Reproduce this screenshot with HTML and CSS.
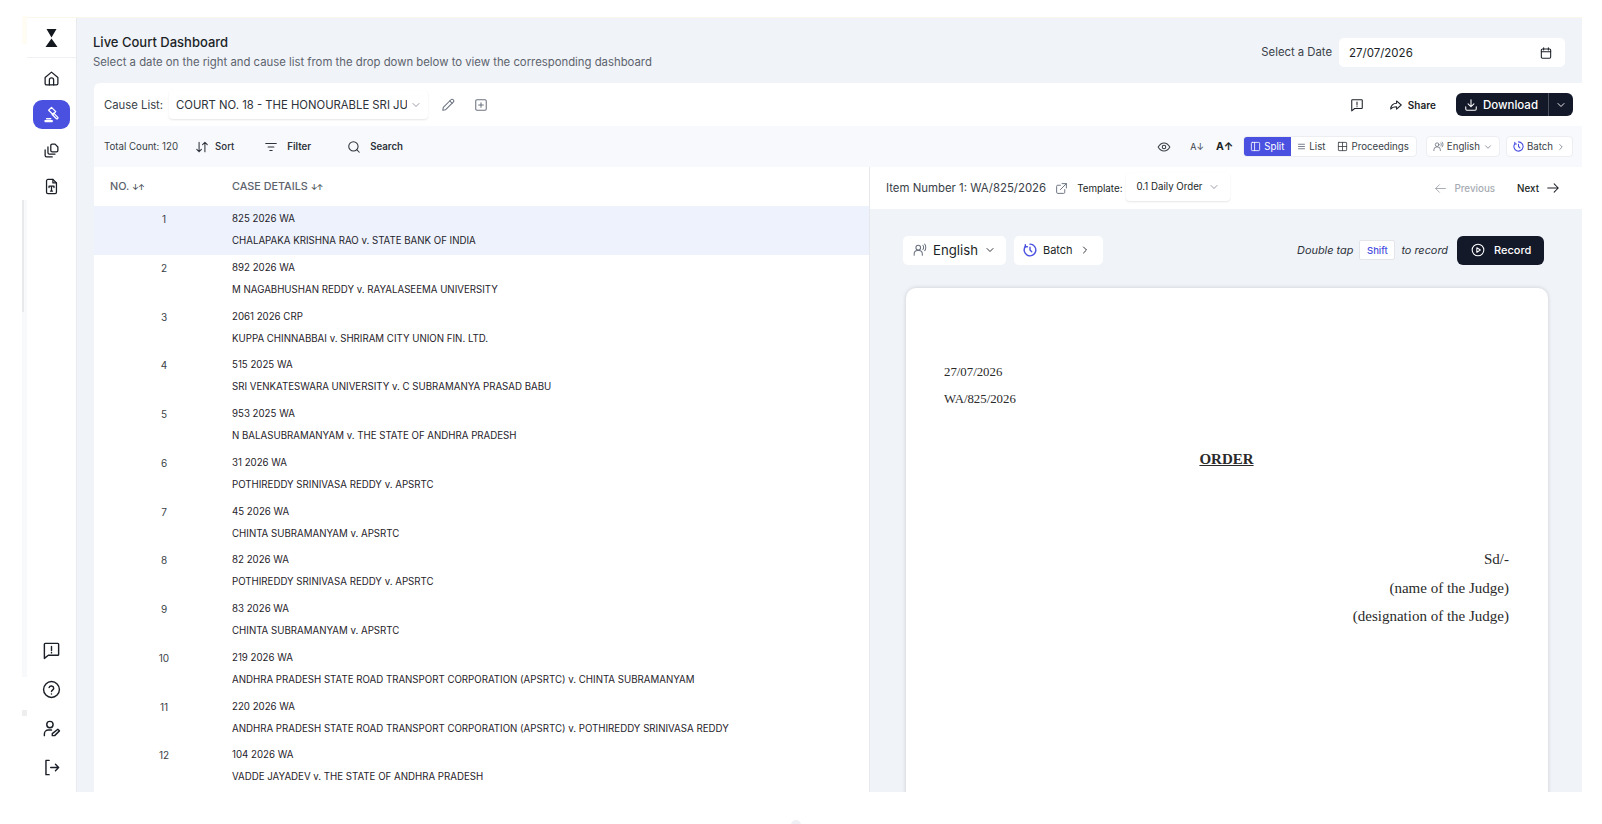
FILE: index.html
```html
<!DOCTYPE html>
<html lang="en">

<head>
    <meta charset="UTF-8">
    <meta name="viewport" content="width=device-width, initial-scale=1.0">
    <title>Live Court Dashboard</title>
    <link rel="stylesheet" href="styles.css">
</head>

<body>
    <svg class="sprite" width="0" height="0">
        <symbol id="i-home" viewBox="0 0 24 24"><path d="M3 10.500 12 3l9 7.500V19a2 2 0 0 1-2 2H5a2 2 0 0 1-2-2z"/><path d="M9 21v-7a3 3 0 0 1 6 0v7"/></symbol>
        <symbol id="i-gavel" viewBox="0 0 24 24"><path d="m8 6 4-4 6 6-4 4z"/><path d="m15 10 6 6a1.500 1.500 0 0 1-2 2l-6-6"/><path d="M5 18h6"/><path d="M3 22v-1.500h10V22z"/></symbol>
        <symbol id="i-copy" viewBox="0 0 24 24"><path d="M13 3h4l4 4v5a2 2 0 0 1-2 2h-6a2 2 0 0 1-2-2V5a2 2 0 0 1 2-2z"/><path d="M7 7v8a2 2 0 0 0 2 2h8"/><path d="M3 11v8a2 2 0 0 0 2 2h8"/></symbol>
        <symbol id="i-file" viewBox="0 0 24 24"><path d="M14 2H7a2 2 0 0 0-2 2v16a2 2 0 0 0 2 2h10a2 2 0 0 0 2-2V7z"/><path d="M14 2v5h5"/><path d="M8.500 13.500V11.500h7v2M12 11.500v7M10.500 18.500h3"/></symbol>
        <symbol id="i-chat" viewBox="0 0 24 24"><path d="M4 3h16a1 1 0 0 1 1 1v13a1 1 0 0 1-1 1H8l-5 4V4a1 1 0 0 1 1-1z"/><path d="M12 7v5M12 14.500v.5"/></symbol>
        <symbol id="i-help" viewBox="0 0 24 24"><circle cx="12" cy="12" r="10"/><path d="M9 9.500a3 3 0 0 1 5.800 1c0 2-2.800 2.500-2.800 4M12 17.500v.2"/></symbol>
        <symbol id="i-user" viewBox="0 0 24 24"><circle cx="10" cy="7" r="4"/><path d="M3 21v-2a5 5 0 0 1 5-5h4"/><path d="m20 13 2 2-6 6h-3v-2.500z"/></symbol>
        <symbol id="i-logout" viewBox="0 0 24 24"><path d="M9 3H5v18h4"/><path d="M11 12h10M17 8l4 4-4 4"/></symbol>
        <symbol id="i-cal" viewBox="0 0 24 24"><rect x="4" y="5" width="16" height="16" rx="2"/><path d="M8 3v4M16 3v4M4 10h16"/></symbol>
        <symbol id="i-chev" viewBox="0 0 24 24"><path d="m6 9 6 6 6-6"/></symbol>
        <symbol id="i-right" viewBox="0 0 24 24"><path d="m9 6 6 6-6 6"/></symbol>
        <symbol id="i-pen" viewBox="0 0 24 24"><path d="M17 3a2.800 2.800 0 0 1 4 4L8 20l-5 1 1-5z"/><path d="m15 5 4 4"/></symbol>
        <symbol id="i-plus" viewBox="0 0 24 24"><rect x="3" y="3" width="18" height="18" rx="2"/><path d="M12 8v8M8 12h8"/></symbol>
        <symbol id="i-share" viewBox="0 0 24 24"><path d="M13 5l8 7-8 7v-4c-5 0-8 1-10 4 0-6 4-10 10-10z"/></symbol>
        <symbol id="i-download" viewBox="0 0 24 24"><path d="M12 3v12M7 10l5 5 5-5"/><path d="M3 15v4a2 2 0 0 0 2 2h14a2 2 0 0 0 2-2v-4"/></symbol>
        <symbol id="i-sort" viewBox="0 0 24 24"><path d="M7 4v16M3 16l4 4 4-4M17 20V4M13 8l4-4 4 4"/></symbol>
        <symbol id="i-filter" viewBox="0 0 24 24"><path d="M3 6h18M7 12h10M10 18h4"/></symbol>
        <symbol id="i-search" viewBox="0 0 24 24"><circle cx="11" cy="11" r="8"/><path d="m21 21-4.300-4.300"/></symbol>
        <symbol id="i-eye" viewBox="0 0 24 24"><path d="M2 12s4-7 10-7 10 7 10 7-4 7-10 7-10-7-10-7z"/><circle cx="12" cy="12" r="3"/></symbol>
        <symbol id="i-split" viewBox="0 0 24 24"><rect x="3" y="3" width="18" height="18" rx="2"/><path d="M10 3v18"/></symbol>
        <symbol id="i-list" viewBox="0 0 24 24"><path d="M3 6h18M3 12h18M3 18h18"/></symbol>
        <symbol id="i-table" viewBox="0 0 24 24"><rect x="3" y="3" width="18" height="18" rx="1"/><path d="M12 3v18M3 12h18"/></symbol>
        <symbol id="i-voice" viewBox="0 0 24 24"><circle cx="9" cy="8" r="4"/><path d="M2 21v-2a6 6 0 0 1 6-6h2a6 6 0 0 1 6 6v2"/><path d="M17 4c1.500 1 1.500 6 0 7M20 2c2.500 2 2.500 9 0 11"/></symbol>
        <symbol id="i-clock" viewBox="0 0 24 24"><path d="M12 2a10 10 0 1 1-8 4"/><path d="M4 3v3.500h3.500"/><path d="M12 7v5l3 3"/></symbol>
        <symbol id="i-play" viewBox="0 0 24 24"><circle cx="12" cy="12" r="10"/><path d="m10 8 6 4-6 4z"/></symbol>
        <symbol id="i-ext" viewBox="0 0 24 24"><path d="M13 3h8v8M21 3 10 14"/><path d="M18 14v5a2 2 0 0 1-2 2H5a2 2 0 0 1-2-2V8a2 2 0 0 1 2-2h5"/></symbol>
        <symbol id="i-back" viewBox="0 0 24 24"><path d="M21 12H3M10 5l-7 7 7 7"/></symbol>
        <symbol id="i-next" viewBox="0 0 24 24"><path d="M3 12h18M14 5l7 7-7 7"/></symbol>
    </svg>

    <div class="strip strip-a"></div>
    <div class="strip strip-b"></div>
    <div class="strip strip-c"></div>
    <div class="strip strip-d"></div>
    <div class="speck"></div>

    <div class="app">
        <aside class="sidebar">
            <div class="logo">
                <svg width="13" height="18" viewBox="0 0 13 18"><path d="M1.500 0h10L6.500 8.500zM6.500 9.500 12.500 18H.5z" fill="#14181f"/></svg>
            </div>
            <nav class="nav">
                <a class="nav-item"><svg class="icon nav-icon"><use href="#i-home"/></svg></a>
                <a class="nav-item active"><svg class="icon nav-icon"><use href="#i-gavel"/></svg></a>
                <a class="nav-item"><svg class="icon nav-icon"><use href="#i-copy"/></svg></a>
                <a class="nav-item"><svg class="icon nav-icon"><use href="#i-file"/></svg></a>
            </nav>
            <nav class="nav nav-bottom">
                <a class="nav-item"><svg class="icon nav-icon big"><use href="#i-chat"/></svg></a>
                <a class="nav-item"><svg class="icon nav-icon big"><use href="#i-help"/></svg></a>
                <a class="nav-item"><svg class="icon nav-icon big"><use href="#i-user"/></svg></a>
                <a class="nav-item"><svg class="icon nav-icon big"><use href="#i-logout"/></svg></a>
            </nav>
        </aside>

        <main class="main">
            <header class="page-head">
                <div>
                    <h1>Live Court Dashboard</h1>
                    <p>Select a date on the right and cause list from the drop down below to view the corresponding dashboard</p>
                </div>
                <div class="date-wrap">
                    <span>Select a Date</span>
                    <div class="date-input">27/07/2026 <svg class="icon s14"><use href="#i-cal"/></svg></div>
                </div>
            </header>

            <section class="board">
                <div class="bar-top">
                    <span class="label">Cause List:</span>
                    <div class="select cause">
                        <span class="cause-text">COURT NO. 18 - THE HONOURABLE SRI JUSTICE</span>
                        <svg class="icon s12 muted"><use href="#i-chev"/></svg>
                    </div>
                    <svg class="icon s14 grey edit"><use href="#i-pen"/></svg>
                    <svg class="icon s14 grey add"><use href="#i-plus"/></svg>
                    <div class="spacer"></div>
                    <svg class="icon s14"><use href="#i-chat"/></svg>
                    <span class="share"><svg class="icon s14"><use href="#i-share"/></svg>Share</span>
                    <div class="download">
                        <span class="download-main"><svg class="icon s14"><use href="#i-download"/></svg>Download</span>
                        <span class="download-arrow"><svg class="icon s12"><use href="#i-chev"/></svg></span>
                    </div>
                </div>

                <div class="bar-tools">
                    <span class="count">Total Count: 120</span>
                    <span class="tool t-sort"><svg class="icon s14"><use href="#i-sort"/></svg>Sort</span>
                    <span class="tool t-filter"><svg class="icon s14"><use href="#i-filter"/></svg>Filter</span>
                    <span class="tool t-search"><svg class="icon s14"><use href="#i-search"/></svg>Search</span>
                    <div class="spacer"></div>
                    <svg class="icon s14 eye"><use href="#i-eye"/></svg>
                    <span class="font-small">A↓</span>
                    <span class="font-big">A↑</span>
                    <div class="views">
                        <span class="view on"><svg class="icon s11"><use href="#i-split"/></svg>Split</span>
                        <span class="view view-list"><svg class="icon s9 grey"><use href="#i-list"/></svg>List</span>
                        <span class="view"><svg class="icon s11"><use href="#i-table"/></svg>Proceedings</span>
                    </div>
                    <span class="chip chip-lang"><svg class="icon s11 grey"><use href="#i-voice"/></svg>English<svg class="icon s10 grey"><use href="#i-chev"/></svg></span>
                    <span class="chip chip-batch"><svg class="icon s11 blue"><use href="#i-clock"/></svg>Batch<svg class="icon s10 grey"><use href="#i-right"/></svg></span>
                </div>

                <div class="split">
                    <div class="list">
                        <div class="row row-head">
                            <div class="col-no">NO. <span class="sort-mark">↓↑</span></div>
                            <div class="col-case">CASE DETAILS <span class="sort-mark">↓↑</span></div>
                        </div>
                        <div class="row selected"><div class="num">1</div><div class="case"><div>825 2026 WA</div><div>CHALAPAKA KRISHNA RAO v. STATE BANK OF INDIA</div></div></div>
                        <div class="row"><div class="num">2</div><div class="case"><div>892 2026 WA</div><div>M NAGABHUSHAN REDDY v. RAYALASEEMA UNIVERSITY</div></div></div>
                        <div class="row"><div class="num">3</div><div class="case"><div>2061 2026 CRP</div><div>KUPPA CHINNABBAI v. SHRIRAM CITY UNION FIN. LTD.</div></div></div>
                        <div class="row"><div class="num">4</div><div class="case"><div>515 2025 WA</div><div>SRI VENKATESWARA UNIVERSITY v. C SUBRAMANYA PRASAD BABU</div></div></div>
                        <div class="row"><div class="num">5</div><div class="case"><div>953 2025 WA</div><div>N BALASUBRAMANYAM v. THE STATE OF ANDHRA PRADESH</div></div></div>
                        <div class="row"><div class="num">6</div><div class="case"><div>31 2026 WA</div><div>POTHIREDDY SRINIVASA REDDY v. APSRTC</div></div></div>
                        <div class="row"><div class="num">7</div><div class="case"><div>45 2026 WA</div><div>CHINTA SUBRAMANYAM v. APSRTC</div></div></div>
                        <div class="row"><div class="num">8</div><div class="case"><div>82 2026 WA</div><div>POTHIREDDY SRINIVASA REDDY v. APSRTC</div></div></div>
                        <div class="row"><div class="num">9</div><div class="case"><div>83 2026 WA</div><div>CHINTA SUBRAMANYAM v. APSRTC</div></div></div>
                        <div class="row"><div class="num">10</div><div class="case"><div>219 2026 WA</div><div>ANDHRA PRADESH STATE ROAD TRANSPORT CORPORATION (APSRTC) v. CHINTA SUBRAMANYAM</div></div></div>
                        <div class="row"><div class="num">11</div><div class="case"><div>220 2026 WA</div><div>ANDHRA PRADESH STATE ROAD TRANSPORT CORPORATION (APSRTC) v. POTHIREDDY SRINIVASA REDDY</div></div></div>
                        <div class="row"><div class="num">12</div><div class="case"><div>104 2026 WA</div><div>VADDE JAYADEV v. THE STATE OF ANDHRA PRADESH</div></div></div>
                    </div>

                    <div class="detail">
                        <div class="detail-head">
                            <span class="item-no">Item Number 1: WA/825/2026</span>
                            <svg class="icon s13 grey ext"><use href="#i-ext"/></svg>
                            <span class="tpl-label">Template:</span>
                            <div class="select tpl">0.1 Daily Order <svg class="icon s12 muted"><use href="#i-chev"/></svg></div>
                            <div class="spacer"></div>
                            <span class="pager prev"><svg class="icon s13"><use href="#i-back"/></svg>Previous</span>
                            <span class="pager next">Next<svg class="icon s14"><use href="#i-next"/></svg></span>
                        </div>
                        <div class="detail-body">
                            <div class="rec-bar">
                                <span class="pill lang"><svg class="icon s14 grey"><use href="#i-voice"/></svg>English<svg class="icon s12"><use href="#i-chev"/></svg></span>
                                <span class="pill batch"><svg class="icon s14 blue"><use href="#i-clock"/></svg>Batch<svg class="icon s12"><use href="#i-right"/></svg></span>
                                <div class="spacer"></div>
                                <em class="hint">Double tap</em>
                                <kbd>Shift</kbd>
                                <em class="hint">to record</em>
                                <button class="record"><svg class="icon s14"><use href="#i-play"/></svg>Record</button>
                            </div>
                            <article class="paper">
                                <p>27/07/2026</p>
                                <p>WA/825/2026</p>
                                <h2>ORDER</h2>
                                <div class="sign">
                                    <p>Sd/-</p>
                                    <p>(name of the Judge)</p>
                                    <p>(designation of the Judge)</p>
                                </div>
                            </article>
                        </div>
                    </div>
                </div>
            </section>
        </main>
    </div>
</body>

</html>
```

FILE: styles.css
```css
* {
    box-sizing: border-box;
}

html,
body {
    margin: 0;
    height: 100%;
    overflow: hidden;
}

body {
    font-family: Inter, Arial, sans-serif;
    background-color: white;
    color: #1b1f27;
    position: relative;
}

.sprite {
    display: none;
}

.icon {
    fill: none;
    stroke: currentColor;
    stroke-width: 1.8;
    stroke-linecap: round;
    stroke-linejoin: round;
    flex: none;
}

.s9 { width: 9px; height: 9px; stroke-width: 2.4; stroke-linecap: butt; }
.s10 { width: 10px; height: 10px; }
.s11 { width: 11px; height: 11px; }
.s12 { width: 12px; height: 12px; }
.s13 { width: 13px; height: 13px; }
.s14 { width: 14px; height: 14px; }

.grey { color: #6b7280; }
.muted { color: #8a909b; }
.blue { color: #4a50e0; stroke-width: 2.4; }

.spacer {
    flex: 1;
}

/* bits of the page behind the app */
.strip {
    position: absolute;
    left: 22px;
    width: 5px;
}

.strip-a { top: 16px; height: 28px; background: #fefcf3; }
.strip-b { top: 200px; height: 477px; background: #f8f9fb; }
.strip-c { top: 710px; height: 6px; background: #eeeeee; }
.strip-d { top: 200px; height: 112px; width: 2px; background: #e8e9eb; }

.speck {
    position: absolute;
    left: 791px;
    top: 820px;
    width: 10px;
    height: 10px;
    border-radius: 50%;
    background: #eef0f6;
}

.app {
    display: flex;
    margin: 17px 20px 0 27px;
    height: 775px;
    border-top: 1px solid #faf7ea;
    overflow: hidden;
}

.sidebar {
    width: 50px;
    flex: none;
    display: flex;
    flex-direction: column;
    background: white;
    border-right: 1px solid #e8eaee;
}

.logo {
    height: 40px;
    display: flex;
    align-items: center;
    justify-content: center;
    border-bottom: 1px solid #eef0f3;
}

.nav {
    display: flex;
    flex-direction: column;
    align-items: center;
    gap: 7px;
    padding-top: 6px;
}

.nav-bottom {
    margin-top: auto;
    gap: 10px;
    padding: 0 0 10px;
}

.nav-item {
    width: 37px;
    height: 29px;
    display: flex;
    align-items: center;
    justify-content: center;
    border-radius: 9px;
    color: #1b1f27;
}

.nav-item.active {
    background-color: #4a50e0;
    color: white;
}

.nav-icon {
    width: 17px;
    height: 17px;
}

.nav-icon.big {
    width: 19px;
    height: 19px;
}

.main {
    flex: 1;
    min-width: 0;
    display: flex;
    flex-direction: column;
    padding-left: 17px;
    background-color: #f0f3f8;
}

.page-head {
    height: 65px;
    flex: none;
    display: flex;
    justify-content: space-between;
    margin-left: -1px;
    padding: 16px 17px 0 0;
}

.page-head h1 {
    margin: 0;
    font-size: 13px;
    line-height: 16px;
    font-weight: 500;
}

.page-head p {
    margin: 5px 0 0;
    font-size: 11.330px;
    line-height: 15px;
    color: #5d636d;
}

.date-wrap {
    display: flex;
    align-items: center;
    align-self: flex-start;
    gap: 7px;
    margin-top: 4px;
    font-size: 11.300px;
    color: #3a3f48;
}

.date-wrap > span {
    padding-bottom: 2px;
}

.date-input {
    width: 226px;
    height: 29px;
    display: flex;
    align-items: center;
    justify-content: space-between;
    padding: 0 12px 0 10px;
    background: white;
    border-radius: 5px;
    font-size: 11.500px;
    color: #1b1f27;
}

.board {
    flex: 1;
    min-height: 0;
    display: flex;
    flex-direction: column;
    background: white;
    border-top-left-radius: 6px;
}

.bar-top {
    height: 43px;
    flex: none;
    display: flex;
    align-items: center;
    padding: 0 9px 0 10px;
    font-size: 11.300px;
}

.label {
    color: #3a3f48;
}

.select {
    display: flex;
    align-items: center;
    background: white;
    border-radius: 4px;
    box-shadow: 0 1px 2px rgba(0, 0, 0, 0.1);
}

.cause {
    width: 259px;
    height: 28px;
    margin-left: 6px;
    padding: 0 6px 0 7px;
    gap: 3px;
    color: #2d323b;
}

.cause-text {
    flex: 1;
    white-space: nowrap;
    overflow: hidden;
}

.edit {
    margin-left: 13px;
}

.add {
    margin-left: 19px;
}

.share {
    display: flex;
    align-items: center;
    gap: 5px;
    margin-left: 25px;
    font-size: 10px;
    font-weight: 600;
}

.download {
    display: flex;
    height: 23px;
    margin-left: 20px;
    background-color: #14192a;
    color: white;
    border-radius: 6px;
    font-size: 11.500px;
    font-weight: 500;
}

.download-main {
    display: flex;
    align-items: center;
    gap: 5px;
    padding: 0 10px 0 8px;
}

.download-arrow {
    display: flex;
    align-items: center;
    padding: 0 6px;
    border-left: 1px solid #4a4f5c;
}

.bar-tools {
    height: 41px;
    flex: none;
    display: flex;
    align-items: center;
    padding: 0 9px 0 10px;
    background-color: #f7f9fc;
    font-size: 9.700px;
}

.count {
    color: #3a3f48;
}

.tool {
    display: flex;
    align-items: center;
    font-weight: 500;
    color: #2d323b;
}

.t-sort { margin-left: 17px; gap: 6px; }
.t-filter { margin-left: 30px; gap: 9px; font-weight: 600; }
.t-search { margin-left: 36px; gap: 9px; font-weight: 600; }

.eye {
    color: #3a3f48;
}

.font-small {
    margin-left: 19px;
    font-size: 9px;
    color: #3a3f48;
}

.font-big {
    margin-left: 12px;
    font-size: 10.500px;
    font-weight: 700;
}

.views {
    display: flex;
    height: 21px;
    margin-left: 10px;
    background: white;
    border: 1px solid #eceef2;
    border-radius: 4px;
    overflow: hidden;
}

.view {
    display: flex;
    align-items: center;
    gap: 3px;
    padding: 0 7px;
    color: #3a3f48;
}

.view-list {
    padding: 0 5px 0 6px;
}

.view.on {
    margin: -1px 0 -1px -1px;
    background-color: #4a50e0;
    color: white;
}

.chip {
    display: flex;
    align-items: center;
    gap: 3px;
    height: 21px;
    padding: 0 6px;
    background: white;
    border: 1px solid #eceef2;
    border-radius: 4px;
    color: #3a3f48;
}

.chip-lang { margin-left: 9px; }
.chip-batch { margin-left: 6px; }

.split {
    flex: 1;
    min-height: 0;
    display: flex;
}

.list {
    width: 776px;
    flex: none;
    border-right: 1px solid #e6e8ec;
}

.row {
    display: flex;
    height: 48.750px;
}

.row-head {
    height: 39px;
    align-items: center;
    font-size: 10.800px;
    font-weight: 500;
    color: #5d636d;
}

.col-no {
    width: 138px;
    padding-left: 16px;
}

.sort-mark {
    font-size: 8px;
    letter-spacing: -1px;
    color: #3a3f48;
}

.selected {
    background-color: #edf2fc;
}

.num {
    width: 138px;
    padding: 7px 0 0 2px;
    text-align: center;
    font-size: 10px;
    line-height: 12px;
    color: #3a3f48;
}

.case {
    font-size: 9.700px;
    line-height: 12px;
    color: #1f232b;
    padding-top: 7px;
}

.case div + div {
    margin-top: 10px;
}

.detail {
    flex: 1;
    min-width: 0;
    display: flex;
    flex-direction: column;
}

.detail-head {
    height: 42px;
    flex: none;
    display: flex;
    align-items: center;
    padding: 0 22px 0 16px;
    font-size: 11.400px;
}

.item-no {
    color: #3a3f48;
}

.ext {
    margin-left: 9px;
}

.tpl-label {
    margin-left: 9px;
    font-size: 9.800px;
}

.tpl {
    width: 104px;
    height: 28px;
    margin: -3px 0 0 3px;
    padding: 0 10px 0 11px;
    justify-content: space-between;
    font-size: 9.700px;
}

.pager {
    display: flex;
    align-items: center;
    gap: 7px;
    font-size: 9.800px;
    font-weight: 500;
}

.prev {
    color: #a7abb3;
}

.next {
    margin-left: 22px;
    color: #1b1f27;
}

.detail-body {
    flex: 1;
    min-height: 0;
    background-color: #f0f3f8;
    padding: 26px 38px 0 33px;
}

.rec-bar {
    display: flex;
    align-items: center;
    height: 30px;
}

.pill {
    display: flex;
    align-items: center;
    height: 29px;
    background: white;
    border-radius: 5px;
    color: #1b1f27;
}

.lang {
    gap: 6px;
    padding: 0 10px 0 10px;
    font-size: 13.200px;
}

.batch {
    gap: 6px;
    margin-left: 8px;
    padding: 0 12px 0 9px;
    font-size: 11px;
}

.hint {
    font-size: 10.900px;
    color: #2d323b;
}

kbd {
    width: 36px;
    height: 20px;
    margin: 0 6px;
    display: flex;
    align-items: center;
    justify-content: center;
    background: white;
    border: 1px solid #e3e5ea;
    border-radius: 2px;
    font-family: Inter, Arial, sans-serif;
    font-size: 9.500px;
    font-weight: 500;
    color: #4a50e0;
}

.record {
    display: flex;
    align-items: center;
    gap: 9px;
    width: 87px;
    height: 29px;
    margin-left: 9px;
    padding: 0 0 0 14px;
    border: none;
    border-radius: 6px;
    background-color: #14192a;
    color: white;
    font-family: Inter, Arial, sans-serif;
    font-size: 11px;
    font-weight: 500;
}

.paper {
    margin: 23px -4px 0 3px;
    height: 600px;
    padding: 76px 39px 0 38px;
    background: white;
    border-radius: 10px;
    box-shadow: 0 0 4px rgba(0, 0, 0, 0.16);
    font-family: "Liberation Serif", "Times New Roman", serif;
    font-size: 12.800px;
    color: #2a2a2a;
}

.paper p {
    margin: 0 0 11px;
    line-height: 16px;
}

.paper h2 {
    margin: 43px 0 0;
    text-align: center;
    font-size: 15px;
    line-height: 18px;
    text-decoration: underline;
}

.sign {
    margin-top: 83px;
    text-align: right;
    font-size: 15px;
}

.sign p {
    margin-bottom: 12.700px;
}
```
